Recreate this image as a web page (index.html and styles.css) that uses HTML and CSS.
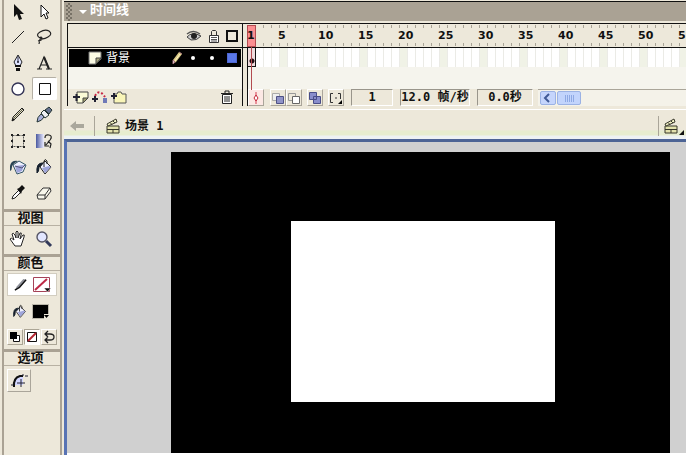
FILE: index.html
```html
<!DOCTYPE html>
<html lang="zh-CN">
<head>
<meta charset="utf-8">
<title>时间线</title>
<link rel="stylesheet" href="styles.css">
</head>
<body>
<svg class="defs" aria-hidden="true">
  <symbol id="clapper" viewBox="0 0 16 16">
    <path d="M2 8h12v7H2z" fill="#e3e2ad" stroke="#38382b"/>
    <path d="M2 6l9-5 1 3-9 4z" fill="#f3f2c6" stroke="#38382b"/>
    <path d="M5 4.500l2 2M8 3l2 2M2 11.500h12M8 12v3" stroke="#38382b" fill="none"/>
  </symbol>
  <symbol id="bucket" viewBox="0 0 18 18">
    <path d="M5 9l5-6 6 6-6 7z" fill="#eef0ff" stroke="#222"/>
    <path d="M7 10l7-2 2 1-6 6z" fill="#9fa5da"/>
    <path d="M9 9V3q1-3 3 0v3" fill="none" stroke="#222"/>
    <path d="M7 5Q1 5 2 15q2-1 2-6l4-4z" fill="#16202d" stroke="#16202d"/>
  </symbol>
</svg>
<aside class="toolbar">
  <div class="tools">
    <button class="tool" aria-label="箭头"><svg viewBox="0 0 18 18"><path d="M5 1v13l3-3 2 6 3-1-2-5h4z" fill="#111"/></svg></button>
    <button class="tool" aria-label="部分选取"><svg viewBox="0 0 18 18"><path d="M6 2v12l3-3 2 5 2-1-2-5h3z" fill="#fff" stroke="#111"/></svg></button>
    <button class="tool" aria-label="线条"><svg viewBox="0 0 18 18"><path d="M3 15L15 3" stroke="#222"/></svg></button>
    <button class="tool" aria-label="套索"><svg viewBox="0 0 18 18"><path d="M5 10Q0 7 5 4t9-1q4 3-1 6t-8 1q1-2 2 0t-4 3M5 11l-1 5" fill="none" stroke="#222" stroke-width="1.2"/></svg></button>
    <button class="tool" aria-label="钢笔"><svg viewBox="0 0 18 18"><path d="M9 1L5 8l2 4h4l2-4z" fill="#dfe4ff" stroke="#222"/><path d="M9 2v6" stroke="#334"/><circle cx="9" cy="8" r="1" fill="#223"/><path d="M6 11h6v2H6zM7 14h4v3H7z" fill="#111"/></svg></button>
    <button class="tool" aria-label="文本"><svg viewBox="0 0 18 18"><path d="M2 15h5M11 15h6M4 15L9 3l5 12M6 11h6" fill="none" stroke="#222" stroke-width="1.2"/><path d="M9 3l5 12" stroke="#222" stroke-width="2"/></svg></button>
    <button class="tool" aria-label="椭圆"><svg viewBox="0 0 18 18"><circle cx="9" cy="9" r="6" fill="#fff" stroke="#335" stroke-width="1.4"/></svg></button>
    <button class="tool active" aria-label="矩形"><svg viewBox="0 0 18 18"><path d="M3.500 3.500h11v11h-11z" fill="#fff" stroke="#111"/></svg></button>
    <button class="tool" aria-label="铅笔"><svg viewBox="0 0 18 18"><path d="M3 15l1-4 9-9 2 2-9 9z" fill="#e7e3bb" stroke="#222"/><path d="M3 15l1-3 2 2z" fill="#111"/><path d="M5 12l9-9" stroke="#555"/></svg></button>
    <button class="tool" aria-label="刷子"><svg viewBox="0 0 18 18"><path d="M2 16q0-5 4-8l3 3q-2 4-7 5z" fill="#a9b0da" stroke="#233"/><path d="M6 7l3-3 5 5-4 3z" fill="#eef0f5" stroke="#233"/><path d="M10 4l4-3 3 3-3 4z" fill="#66728e" stroke="#233"/></svg></button>
    <button class="tool" aria-label="任意变形"><svg viewBox="0 0 18 18"><path d="M3.500 3.500h11v11h-11z" fill="none" stroke="#555" stroke-dasharray="2 1"/><path d="M2 2h2v2H2zM8 2h2v2H8zM14 2h2v2h-2zM2 8h2v2H2zM14 8h2v2h-2zM2 14h2v2H2zM8 14h2v2H8zM14 14h2v2h-2z" fill="#222"/></svg></button>
    <button class="tool" aria-label="填充变形"><svg viewBox="0 0 18 18"><defs><linearGradient id="fade"><stop stop-color="#4a58a0"/><stop offset="1" stop-color="#eef"/></linearGradient></defs><path d="M1 2h8v14H1z" fill="url(#fade)"/><path d="M10 6q0-4 4-3t1 5l-4 5M10 10v4h4M13 9l3 3-1 4" fill="none" stroke="#222" stroke-width="1.2"/></svg></button>
    <button class="tool" aria-label="墨水瓶"><svg viewBox="0 0 18 18"><path d="M4 7l6-4 7 4-3 7-6 2z" fill="#eef0ff" stroke="#356"/><path d="M6 8l9-1-2 6-5 2z" fill="#9fa5da"/><path d="M6 8l7 2 3-3" fill="none" stroke="#557"/><path d="M9 3Q2 2 1 8v5q2-1 2-4t6-6z" fill="#294353"/></svg></button>
    <button class="tool" aria-label="颜料桶"><svg viewBox="0 0 18 18"><use href="#bucket"/></svg></button>
    <button class="tool" aria-label="滴管"><svg viewBox="0 0 18 18"><path d="M3 15l1-3 6-6 2 2-6 6z" fill="#fff" stroke="#222"/><path d="M8 5l2-1 3-3 3 3-3 3-1 3z" fill="#111"/></svg></button>
    <button class="tool" aria-label="橡皮擦"><svg viewBox="0 0 18 18"><path d="M2 11l6-7h7l1 3-6 8H3z" fill="#f8f7ec" stroke="#333"/><path d="M2 11h8l5-7M10 11v4" fill="none" stroke="#333"/></svg></button>
  </div>
  <h2 class="heading">视图</h2>
  <div class="view-tools">
    <button class="tool" aria-label="手形"><svg viewBox="0 0 18 18"><path d="M6 16L1 9q1-2 4 1L3 4q1-2 3 1l1 3V2q1-2 2 0v6l2-5q2-1 1 2l-1 4 3-4q2-1 1 2l-2 6-1 3z" fill="#fff" stroke="#222"/></svg></button>
    <button class="tool" aria-label="缩放"><svg viewBox="0 0 18 18"><circle cx="7" cy="7" r="5" fill="#e2e6ff" stroke="#556" stroke-width="1.400"/><path d="M11 11l5 5" stroke="#333a5b" stroke-width="3"/></svg></button>
  </div>
  <h2 class="heading">颜色</h2>
  <div class="colors">
    <div class="color-row selected">
      <svg class="mini" viewBox="0 0 16 16"><path d="M2 14l2-4 7-8 3 1-7 9z" fill="#8e919a"/><path d="M2 14l5-3 7-8" fill="none" stroke="#111" stroke-width="1.500"/></svg>
      <button class="swatch" aria-label="笔触颜色"><svg viewBox="0 0 18 16"><path d="M.5.5h16v14H.5z" fill="#fff" stroke="#a54358"/><path d="M2 13L14 2" stroke="#bd2946" stroke-width="2"/><path d="M11 11h7l-3.500 4z" fill="#111" stroke="#fff" stroke-width=".5"/></svg></button>
    </div>
    <div class="color-row">
      <svg class="mini" viewBox="0 0 18 18"><use href="#bucket"/></svg>
      <button class="swatch" aria-label="填充颜色"><svg viewBox="0 0 18 16"><path d="M.5.5h16v14H.5z" fill="#000" stroke="#bbb7aa"/><path d="M12 10h6v6h-6z" fill="#ede8da"/><path d="M12 11h5l-2.500 3z"/></svg></button>
    </div>
    <div class="color-buttons">
      <button aria-label="黑白"><svg viewBox="0 0 14 14"><path d="M5.500 5.500h6v6h-6z" fill="#fff" stroke="#111"/><path d="M2 2h7v7H2z"/></svg></button>
      <button class="pressed" aria-label="没有颜色"><svg viewBox="0 0 14 14"><path d="M2.500 2.500h9v9h-9z" fill="#fff" stroke="#111"/><path d="M3 11l8-8" stroke="#b32431" stroke-width="2"/></svg></button>
      <button aria-label="交换颜色"><svg viewBox="0 0 14 14"><path d="M3 4h5q4 0 4 3t-4 3H3M6 1L3 4l3 3M6 7l-3 3 3 3" fill="none" stroke="#222" stroke-width="1.300"/></svg></button>
    </div>
  </div>
  <h2 class="heading">选项</h2>
  <div class="options">
    <button aria-label="圆角矩形半径"><svg viewBox="0 0 20 20"><path d="M5 14q0-7 9-9v9z" fill="#d3d7ff"/><path d="M5 16q-1-9 6-11h3" fill="none" stroke="#111" stroke-width="2"/><path d="M14 3v2M16 5h3M2 14h2M8 12h8M12 8v8" stroke="#223" fill="none"/></svg></button>
  </div>
</aside>
<main class="workspace">
  <header class="titlebar"><span class="grip"></span><span class="caret"></span><h1>时间线</h1></header>
  <section class="timeline">
    <div class="layers">
      <div class="layer-head">
        <svg class="eye" viewBox="0 0 16 12"><path d="M1 7Q6 1 15 6q-4 5-10 4z" fill="#ccc" stroke="#444"/><path d="M1 4Q7-1 14 4" fill="none" stroke="#555" stroke-width="1.500"/><circle cx="8" cy="6" r="3" fill="#222"/></svg>
        <svg class="lock" viewBox="0 0 12 14"><path d="M3.500 7V2.500l1-1h3l1 1V7" fill="none" stroke="#333"/><path d="M1.500 6.500h9v7h-9z" fill="#fff" stroke="#333"/><path d="M3 8.500h6M3 10.500h6M3 12h6" stroke="#555"/></svg>
        <span class="outline-box"></span>
      </div>
      <div class="layer-row">
        <svg class="page" viewBox="0 0 14 14"><path d="M1 1h12v7l-5 5H1z" fill="#fbfbe4" stroke="#777"/><path d="M13 7H8v6z" fill="#aaa97e" stroke="#444"/></svg>
        <span class="layer-name">背景</span>
        <svg class="pencil" viewBox="0 0 12 14"><path d="M2 13V9l6-8 3 2-6 8z" fill="#dac888"/><path d="M2 13V9l2 2zM8 1l3 2" fill="#fff" stroke="#a97780"/><path d="M4 10l5-7" stroke="#fff8be"/></svg>
        <span class="dot"></span><span class="dot second"></span><span class="color-chip"></span>
      </div>
      <div class="layer-space"></div>
      <div class="layer-foot">
        <button aria-label="插入图层"><svg viewBox="0 0 16 14"><path d="M4 2h11v6l-5 5H4z" fill="#fbfbd6" stroke="#444"/><path d="M15 8h-5v5z" fill="#a0a070" stroke="#444"/><path d="M0 7h7M3.500 4v7" stroke="#223" stroke-width="2"/></svg></button>
        <button aria-label="添加引导层"><svg viewBox="0 0 16 14"><path d="M3 6q4-8 10 1" fill="none" stroke="#c82946" stroke-width="2" stroke-dasharray="2 2"/><path d="M0 9h6M3 6v6" stroke="#223" stroke-width="2"/><path d="M11 8h4v5h-4z" fill="#6f79b7"/></svg></button>
        <button aria-label="插入图层文件夹"><svg viewBox="0 0 16 14"><path d="M3 4h3l1-2h3l1 2h4v9H3z" fill="#f9f5b8" stroke="#555"/><path d="M0 6h6M3 3v6" stroke="#223" stroke-width="2"/></svg></button>
        <button class="trash" aria-label="删除图层"><svg viewBox="0 0 14 14"><path d="M2.500 4.500h9v9h-9z" fill="#fff" stroke="#222"/><path d="M1 3.500h12M5 3V1h4v2M5 6v6M7 6v6M9 6v6" fill="none" stroke="#222"/></svg></button>
      </div>
    </div>
    <div class="frames">
      <div class="ruler"><span class="first">1</span><span>5</span><span>10</span><span>15</span><span>20</span><span>25</span><span>30</span><span>35</span><span>40</span><span>45</span><span>50</span><span>55</span></div>
      <div class="track"><span class="keyframe"></span></div>
      <div class="frame-space"></div>
      <div class="playhead"></div>
      <div class="status">
        <button class="center" aria-label="滚动到播放头"><svg viewBox="0 0 14 14"><path d="M7 1v12" stroke="#d63b50"/><path d="M7 4l2 3-2 3-2-3z" fill="#fff" stroke="#c42639"/></svg></button>
        <button class="onion" aria-label="绘图纸外观"><svg viewBox="0 0 14 14"><path d="M1.500 2.500h7v7h-7z" fill="#eee" stroke="#aaa"/><path d="M5.500 5.500h7v7h-7z" fill="#9093c8" stroke="#4e5185"/></svg></button>
        <button aria-label="绘图纸轮廓"><svg viewBox="0 0 14 14"><path d="M1.500 2.500h7v7h-7z" fill="none" stroke="#999"/><path d="M5.500 5.500h7v7h-7z" fill="#fff" stroke="#666"/></svg></button>
        <button class="spaced" aria-label="编辑多个帧"><svg viewBox="0 0 14 14"><path d="M1.500 1.500h7v7h-7zM5.500 5.500h7v7h-7z" fill="#898dcb" stroke="#494d87"/></svg></button>
        <button class="spaced" aria-label="修改绘图纸标记"><svg viewBox="0 0 14 14"><path d="M4 2.500H1.500v9H4M9 2.500h2.500V8M6 7h2" fill="none" stroke="#333"/><path d="M13 9v4H9z"/></svg></button>
        <output class="field frame">1</output>
        <output class="field rate">12.0 帧/秒</output>
        <output class="field time">0.0秒</output>
        <div class="scrollbar"><button aria-label="向左滚动"><svg viewBox="0 0 14 14"><path d="M8 3L4 7l4 4" fill="none" stroke="#405a96" stroke-width="2"/></svg></button><span class="thumb"></span></div>
      </div>
    </div>
  </section>
  <nav class="scenebar">
    <button class="back" aria-label="返回"><svg viewBox="0 0 14 12"><path d="M0 6l6-5v3h8v4H6v3z" fill="#aaa79c"/></svg></button>
    <div class="scene"><svg viewBox="0 0 16 16"><use href="#clapper"/></svg><span>场景 1</span></div>
    <button class="scene-menu" aria-label="编辑场景"><svg viewBox="0 0 16 16"><use href="#clapper"/></svg><span class="corner"></span></button>
  </nav>
  <section class="stage"><div class="movie"><div class="artwork"></div></div></section>
</main>
</body>
</html>
```

FILE: styles.css
```css
* { box-sizing: border-box; }
body {
  margin: 0;
  display: flex;
  height: 100vh;
  overflow: hidden;
  background: #ede8da;
  color: #111;
  font: 12px/16px "Liberation Sans", "Noto Sans CJK SC", sans-serif;
}
button {
  display: flex;
  align-items: center;
  justify-content: center;
  padding: 0;
  border: 0;
  background: transparent;
}
svg { display: block; flex: none; }
h1, h2 { margin: 0; }
.defs { position: absolute; width: 0; height: 0; }

.toolbar {
  flex: none;
  width: 60px;
  margin: 0 2px;
  border: solid #aaa294;
  border-width: 0 2px;
}
.tools, .view-tools {
  display: grid;
  grid-template-columns: 26px 26px;
  grid-auto-rows: 26px;
  padding-left: 1px;
}
.tools { grid-template-rows: 24px; height: 209px; }
.view-tools { height: 28px; }
.tool svg { width: 18px; height: 18px; }
.tool.active {
  margin: 1px 0 2px 1px;
  border: 1px solid #b4afa4;
  border-color: #b4afa4 #fff #fff #b4afa4;
  border-radius: 2px;
  background: #fff;
}
.heading {
  height: 17px;
  padding-right: 3px;
  border-top: 3px solid #aaa294;
  border-bottom: 1px solid #b8b1a3;
  text-align: center;
  font: bold 13px/9px "Noto Sans CJK SC", sans-serif;
}
.colors { height: 78px; padding: 2px 3px; }
.color-row {
  display: flex;
  align-items: center;
  gap: 5px;
  height: 23px;
  padding: 0 5px;
}
.color-row + .color-row { margin-top: 4px; }
.color-row.selected { background: #fff; border: 1px solid #d2cdc0; }
.mini { width: 15px; height: 15px; }
.swatch svg { width: 18px; height: 16px; }
.color-buttons { display: flex; gap: 1px; padding-top: 6px; }
.color-buttons button {
  width: 16px;
  height: 16px;
  border: 1px solid;
  border-color: #fff #aba595 #aba595 #fff;
}
.color-buttons .pressed { border-color: #aba595 #fff #fff #aba595; background: #fff; }
.color-buttons svg { width: 14px; height: 14px; }
.options { padding: 3px; }
.options button {
  width: 24px;
  height: 23px;
  border: 1px solid;
  border-color: #fff #aaa59a #aaa59a #fff;
}
.options svg { width: 20px; height: 20px; }

.workspace { flex: 1; min-width: 0; display: flex; flex-direction: column; }
.titlebar {
  display: flex;
  align-items: center;
  height: 20px;
  margin-top: 1px;
  padding: 0 2px;
  border-top: 1px solid #111;
  background: #aaa294;
  color: #fff;
}
.grip {
  width: 6px;
  height: 18px;
  background: conic-gradient(#777166 25%, #aaa294 0 50%, #777166 0 75%, #aaa294 0) 0 0 / 4px 4px;
}
.caret {
  margin: 0 3px 0 7px;
  border: 4px solid transparent;
  border-top-color: #fff;
  border-bottom: 0;
}
.titlebar h1 { padding-bottom: 6px; font: bold 13px/14px "Noto Sans CJK SC", sans-serif; }

.timeline { display: flex; margin: 2px 0 0 3px; }
.layers {
  flex: none;
  width: 176px;
  border: solid #111;
  border-width: 1px 1px 0;
}
.layer-head {
  display: flex;
  align-items: center;
  justify-content: flex-end;
  gap: 6px;
  height: 24px;
  padding-right: 4px;
  border-bottom: 1px solid #111;
}
.eye { width: 16px; height: 12px; }
.lock { width: 12px; height: 14px; }
.outline-box { width: 12px; height: 12px; border: 2px solid #111; }
.layer-row {
  display: flex;
  align-items: center;
  height: 18px;
  margin: 1px 1px 0;
  padding: 0 4px 0 19px;
  background: #000;
  color: #fff;
}
.page { width: 14px; height: 14px; }
.layer-name { margin-left: 4px; padding-bottom: 2px; font: 12px/16px "Noto Sans CJK SC", sans-serif; }
.pencil { width: 12px; height: 14px; margin-left: auto; }
.dot { width: 4px; height: 4px; margin-left: 8px; border-radius: 50%; background: #fff; }
.dot.second { margin-left: 15px; }
.color-chip { width: 10px; height: 10px; margin-left: 13px; background: #5a78e8; border: 1px solid #4f68d2; }
.layer-space { height: 22px; background: #f5f4ed; }
.layer-foot { display: flex; align-items: center; gap: 3px; height: 17px; padding: 0 7px 1px 5px; }
.layer-foot svg { width: 16px; height: 14px; }
.layer-foot .trash { margin-left: auto; }

.frames { position: relative; flex: 1; min-width: 0; border-top: 1px solid #111; }
.ruler {
  display: flex;
  height: 24px;
  overflow: hidden;
  border-bottom: 1px solid #111;
  padding-left: 4px;
  background:
    repeating-linear-gradient(90deg, #a9a497 0 1px, transparent 1px 8px) 4px 1px / 100% 3px no-repeat,
    repeating-linear-gradient(90deg, #a9a497 0 1px, transparent 1px 8px) 4px 19px / 100% 3px no-repeat;
  font: bold 11px/23px "DejaVu Sans", sans-serif;
}
.ruler span { position: relative; z-index: 2; flex: none; width: 40px; }
.ruler .first { width: 31px; }
.track {
  height: 19px;
  margin-left: 4px;
  border-left: 1px solid #111;
  background:
    repeating-linear-gradient(90deg, transparent 0 7px, #ebebe6 7px 8px),
    repeating-linear-gradient(90deg, #fff 0 32px, #f0f2e6 32px 40px);
}
.keyframe {
  display: block;
  width: 8px;
  height: 19px;
  border-right: 1px solid #111;
  border-bottom: 1px solid #111;
  background: radial-gradient(circle at 4px 13px, #210b10 0 2px, transparent 3px), #efdcde;
}
.frame-space { height: 22px; margin-left: 4px; border-left: 1px solid #111; background: #f5f4ed; }
.playhead { position: absolute; z-index: 1; top: 1px; left: 4px; width: 9px; height: 22px; border: 1px solid #b34b50; background: #fb8e91; }
.playhead::after { content: ""; position: absolute; top: 21px; left: 3px; width: 1px; height: 43px; background: #b34b50; }
.status { display: flex; align-items: center; height: 17px; margin-left: 4px; border-left: 1px solid #111; overflow: hidden; }
.status > button {
  flex: none;
  width: 16px;
  height: 17px;
  border: 1px solid;
  border-color: #fff #aaa59a #aaa59a #fff;
}
.status button svg { width: 14px; height: 14px; }
.status .center { background: #fce8e4; }
.status .onion { margin-left: 6px; }
.status .spaced { margin-left: 5px; }
.field {
  flex: none;
  height: 17px;
  margin-left: 7px;
  border: solid;
  border-width: 1px;
  border-color: #99958b #fff #fff #99958b;
  text-align: center;
  white-space: nowrap;
  font: bold 12px/15px "DejaVu Sans Mono", "Noto Sans CJK SC", monospace;
}
.frame { width: 42px; }
.rate { width: 70px; }
.time { width: 56px; }
.scrollbar {
  display: flex;
  flex: 1;
  gap: 1px;
  height: 17px;
  margin-left: 5px;
  padding: 1px 2px;
  border-top: 1px solid #aaa599;
  background: #f4f2e9;
}
.scrollbar button, .thumb {
  width: 16px;
  border: 1px solid #9bb2e4;
  border-radius: 2px;
  background: #c5d5fc;
}
.thumb {
  width: 24px;
  background: repeating-linear-gradient(90deg, #8ea9e4 0 1px, transparent 1px 2px) center / 9px 7px no-repeat, #c2d4fc;
}

.scenebar {
  display: flex;
  align-items: center;
  height: 30px;
  margin-top: 3px;
  padding: 3px 2px 0 6px;
  border-top: 1px solid #fff;
  background: linear-gradient(#ede8da 0 20px, #e7edcf 21px 25px, #edf2f3 26px);
}
.back { height: 20px; padding-right: 10px; border-right: 1px solid #aaa599; }
.back svg { width: 14px; height: 12px; }
.scene { display: flex; align-items: center; gap: 4px; margin-left: 10px; font: bold 12px/16px "DejaVu Sans Mono", "Noto Sans CJK SC", monospace; }
.scene svg, .scene-menu svg { width: 16px; height: 16px; }
.scene-menu { height: 20px; margin-left: auto; padding-left: 4px; border-left: 1px solid #aaa599; }
.corner { align-self: flex-end; margin-bottom: 1px; border: solid transparent; border-width: 5px 0 0 5px; border-bottom: 5px solid #111; border-top: 0; }
.stage {
  display: flex;
  flex: 1;
  min-height: 0;
  padding: 10px 16px 2px 104px;
  border: 3px solid #4d6495;
  border-width: 3px 0 0 3px;
  border-left-color: #5873b4;
  background: linear-gradient(#fff, #fff) bottom / 100% 2px no-repeat, #d0d0d0;
}
.movie { display: flex; flex: 1; padding: 69px 115px 51px 120px; background: #000; }
.artwork { flex: 1; background: #fff; }
```
